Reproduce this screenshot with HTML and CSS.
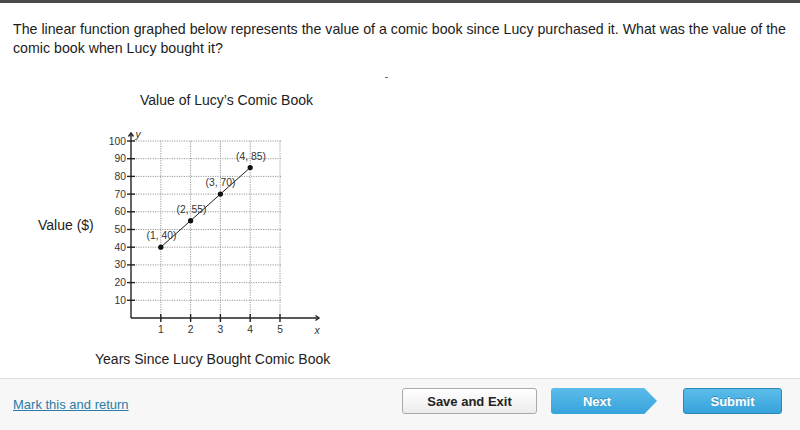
FILE: index.html
```html
<!DOCTYPE html>
<html>
<head>
<meta charset="utf-8">
<link rel="stylesheet" href="styles.css">
</head>
<body>
<div class="topbar"></div>
<main class="content">
  <p class="question">The linear function graphed below represents the value of a comic book since Lucy purchased it. What was the value of the comic book when Lucy bought it?</p>
  <div class="dash"></div>
  <figure class="chart">
    <div class="chart-title">Value of Lucy’s Comic Book</div>
    <div class="chart-row">
      <div class="y-title">Value ($)</div>
      <svg class="plot" width="235" height="220" viewBox="100 125 235 220" xmlns="http://www.w3.org/2000/svg">
        <g stroke="#9a9a9a" stroke-width="1" stroke-dasharray="1.2 1.2" fill="none">
          <line x1="131" y1="299.3" x2="281" y2="299.3"/>
          <line x1="131" y1="281.6" x2="281" y2="281.6"/>
          <line x1="131" y1="263.9" x2="281" y2="263.9"/>
          <line x1="131" y1="246.2" x2="281" y2="246.2"/>
          <line x1="131" y1="228.5" x2="281" y2="228.5"/>
          <line x1="131" y1="210.8" x2="281" y2="210.8"/>
          <line x1="131" y1="193.1" x2="281" y2="193.1"/>
          <line x1="131" y1="175.4" x2="281" y2="175.4"/>
          <line x1="131" y1="157.7" x2="281" y2="157.7"/>
          <line x1="131" y1="140" x2="281" y2="140"/>
          <line x1="160.8" y1="140" x2="160.8" y2="317"/>
          <line x1="190.6" y1="140" x2="190.6" y2="317"/>
          <line x1="220.4" y1="140" x2="220.4" y2="317"/>
          <line x1="250.2" y1="140" x2="250.2" y2="317"/>
          <line x1="280" y1="140" x2="280" y2="317"/>
        </g>
        <g stroke="#222" stroke-width="1.4" fill="none">
          <line x1="131" y1="317" x2="131" y2="132"/>
          <polyline points="128.5,135.5 131,132 133.5,135.5"/>
          <line x1="131" y1="317" x2="319" y2="317"/>
          <polyline points="315.5,314.5 319,317 315.5,319.5"/>
          <line x1="127" y1="299.3" x2="135" y2="299.3"/>
          <line x1="127" y1="281.6" x2="135" y2="281.6"/>
          <line x1="127" y1="263.9" x2="135" y2="263.9"/>
          <line x1="127" y1="246.2" x2="135" y2="246.2"/>
          <line x1="127" y1="228.5" x2="135" y2="228.5"/>
          <line x1="127" y1="210.8" x2="135" y2="210.8"/>
          <line x1="127" y1="193.1" x2="135" y2="193.1"/>
          <line x1="127" y1="175.4" x2="135" y2="175.4"/>
          <line x1="127" y1="157.7" x2="135" y2="157.7"/>
          <line x1="127" y1="140" x2="135" y2="140"/>
          <line x1="160.8" y1="313" x2="160.8" y2="321"/>
          <line x1="190.6" y1="313" x2="190.6" y2="321"/>
          <line x1="220.4" y1="313" x2="220.4" y2="321"/>
          <line x1="250.2" y1="313" x2="250.2" y2="321"/>
          <line x1="280" y1="313" x2="280" y2="321"/>
        </g>
        <g class="ticklabel" text-anchor="end">
          <text x="126" y="302.8">10</text>
          <text x="126" y="285.1">20</text>
          <text x="126" y="267.4">30</text>
          <text x="126" y="249.7">40</text>
          <text x="126" y="232">50</text>
          <text x="126" y="214.3">60</text>
          <text x="126" y="196.6">70</text>
          <text x="126" y="178.9">80</text>
          <text x="126" y="161.2">90</text>
          <text x="126" y="143.5">100</text>
        </g>
        <g class="ticklabel" text-anchor="middle">
          <text x="160.8" y="332">1</text>
          <text x="190.6" y="332">2</text>
          <text x="220.4" y="332">3</text>
          <text x="250.2" y="332">4</text>
          <text x="280" y="332">5</text>
        </g>
        <text class="axisvar" x="317" y="332.5" text-anchor="middle">x</text>
        <text class="axisvar" x="135.5" y="137">y</text>
        <line x1="160.8" y1="246.2" x2="250.2" y2="166.55" stroke="#222" stroke-width="1"/>
        <g fill="#111">
          <circle cx="160.8" cy="246.2" r="2.6"/>
          <circle cx="190.6" cy="219.65" r="2.6"/>
          <circle cx="220.4" cy="193.1" r="2.6"/>
          <circle cx="250.2" cy="166.55" r="2.6"/>
        </g>
        <g class="ticklabel" text-anchor="middle">
          <text x="161.5" y="238">(1, 40)</text>
          <text x="191.5" y="211.5">(2, 55)</text>
          <text x="220.5" y="185">(3, 70)</text>
          <text x="251" y="158.5">(4, 85)</text>
        </g>
      </svg>
    </div>
    <div class="x-title">Years Since Lucy Bought Comic Book</div>
  </figure>
</main>
<footer class="footer">
  <a class="mark-link" href="#">Mark this and return</a>
  <div class="actions">
    <button class="btn btn-light">Save and Exit</button>
    <button class="btn btn-blue btn-next">Next</button>
    <button class="btn btn-blue btn-submit">Submit</button>
  </div>
</footer>
</body>
</html>
```
FILE: styles.css
```css
* { box-sizing: border-box; }
html, body { margin: 0; padding: 0; }
body {
  width: 800px;
  height: 430px;
  display: flex;
  flex-direction: column;
  background: #fff;
  font-family: "Liberation Sans", Arial, Helvetica, sans-serif;
  color: #222;
  overflow: hidden;
}
.topbar {
  height: 3px;
  background: #4a4a4a;
  flex: none;
}
.content {
  flex: 1;
  display: flex;
  flex-direction: column;
}
.question {
  margin: 0;
  padding: 17px 8px 0 13px;
  font-size: 14.2px;
  line-height: 19px;
  color: #1c1c1c;
}
.dash {
  margin: 19px 0 0 385px;
  width: 3px;
  height: 1px;
  background: #666;
}
.chart {
  margin: 0;
  display: flex;
  flex-direction: column;
}
.chart-title {
  margin: 14px 0 0 140px;
  font-size: 14px;
  line-height: 16px;
  color: #222;
}
.chart-row {
  display: flex;
  align-items: center;
  margin-top: 18px;
  padding-left: 38px;
}
.y-title {
  width: 62px;
  font-size: 14px;
  color: #222;
  margin-top: -22px;
}
.plot { display: block; }
.ticklabel {
  font-family: "Liberation Sans", Arial, sans-serif;
  font-size: 10.3px;
  fill: #333;
}
.axisvar {
  font-family: "Liberation Sans", Arial, sans-serif;
  font-size: 10.5px;
  font-style: italic;
  fill: #333;
}
.x-title {
  margin: 5px 0 0 95px;
  font-size: 14px;
  line-height: 16px;
  color: #222;
}
.footer {
  flex: none;
  height: 52px;
  border-top: 1px solid #dcdcdc;
  background: #f7f7f7;
  display: flex;
  align-items: center;
  justify-content: space-between;
  padding: 0 18px 0 13px;
}
.mark-link {
  font-size: 13px;
  color: #2a7ca6;
  text-decoration: underline;
  margin-top: -1px;
}
.actions {
  display: flex;
  align-items: center;
  margin-top: -7px;
}
.btn {
  height: 26px;
  font-family: "Liberation Sans", Arial, sans-serif;
  font-size: 13px;
  font-weight: bold;
  border-radius: 3px;
  padding: 0;
  cursor: pointer;
}
.btn-light {
  width: 135px;
  background: linear-gradient(#ffffff, #ececec);
  border: 1px solid #a9a9a9;
  color: #222;
}
.btn-blue {
  background: linear-gradient(#5cbcea, #36a3db);
  border: 1px solid #2b87b8;
  color: #fff;
  text-shadow: 0 -1px 0 rgba(0,0,0,0.25);
}
.btn-next {
  width: 106px;
  margin-left: 14px;
  border: none;
  border-radius: 3px;
  clip-path: polygon(0 0, 88% 0, 100% 50%, 88% 100%, 0 100%);
  background: linear-gradient(#5cbcea, #36a3db);
  padding-right: 14px;
}
.btn-submit {
  width: 99px;
  margin-left: 26px;
}
```
